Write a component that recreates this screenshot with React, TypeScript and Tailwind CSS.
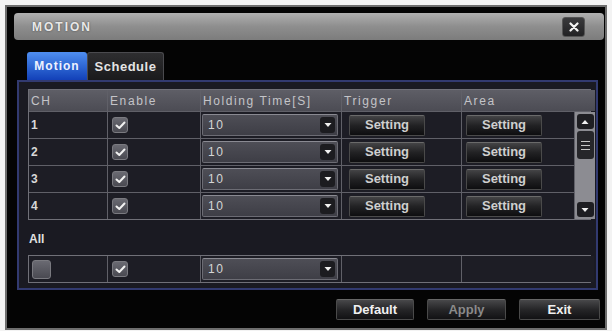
import React from "react";

const font = { fontFamily: '"Liberation Sans", Arial, sans-serif' };

function Check({ checked = true, size = 16 }: { checked?: boolean; size?: number }) {
  return (
    <div
      className="flex items-center justify-center rounded-[3px] border border-[#7a7a80] bg-gradient-to-b from-[#6a6a72] to-[#4a4a52]"
      style={{ width: size, height: size }}
    >
      {checked && (
        <svg width="11" height="9" viewBox="0 0 11 9">
          <path d="M1.5 4.5 L4.3 7 L9.5 1.5" stroke="#f2f2f2" strokeWidth="2" fill="none" strokeLinecap="round" strokeLinejoin="round" />
        </svg>
      )}
    </div>
  );
}

function Dropdown() {
  return (
    <div className="flex h-[22px] w-[136px] items-center justify-between rounded-[2px] border border-[#6c6c74] border-t-[#8a8a92] bg-gradient-to-b from-[#4e4e56] to-[#3e3e46] pl-[5px] pr-[2px]">
      <span className="text-[12px] tracking-[1.5px] text-[#d6d6d6]">10</span>
      <div className="flex h-[16px] w-[15px] items-center justify-center rounded-[3px] bg-[#1c1c20]">
        <svg width="8" height="6" viewBox="0 0 8 6">
          <path d="M0.5 1 L7.5 1 L4 5 Z" fill="#f0f0f0" />
        </svg>
      </div>
    </div>
  );
}

function SettingBtn() {
  return (
    <div className="flex h-[21px] w-[76px] items-center justify-center rounded-[2px] border border-[#4a4a4a] border-t-[#6a6a6a] bg-gradient-to-b from-[#444446] via-[#222224] to-[#0e0e10] text-[13px] font-bold text-[#cfcfcf]">
      Setting
    </div>
  );
}

function Cell({ children, className = "" }: { children?: React.ReactNode; className?: string }) {
  return <div className={"flex items-center bg-[#1d1d25] " + className}>{children}</div>;
}

export default function App() {
  const rows = [1, 2, 3, 4];
  return (
    <div className="h-[331px] w-[612px] overflow-hidden bg-[#f3f3f3] pl-[5px] pt-[5px]" style={font}>
      <div className="flex h-[325px] w-[602px] flex-col border-2 border-[#6e6e6e] bg-[#040404]">
        {/* Title bar */}
        <div className="ml-[7px] mr-[1px] mt-[6px] flex h-[27px] items-center justify-between rounded-[4px] bg-gradient-to-b from-[#b0b0b0] via-[#8e8e8e] to-[#7c7c7c] pl-[18px] pr-[19px]">
          <span className="text-[12px] font-bold tracking-[2px] text-[#e8e8e8] [text-shadow:0_0_2px_#444]">MOTION</span>
          <div className="flex h-[20px] w-[23px] items-center justify-center rounded-[3px] border border-[#555] bg-gradient-to-b from-[#3a3a3c] to-[#222224]">
            <svg width="10" height="10" viewBox="0 0 10 10">
              <path d="M1.5 1.5 L8.5 8.5 M8.5 1.5 L1.5 8.5" stroke="#f4f4f4" strokeWidth="2.2" strokeLinecap="round" />
            </svg>
          </div>
        </div>

        {/* Tabs */}
        <div className="ml-[20px] mt-[12px] flex h-[28px] items-end">
          <div className="flex h-[28px] w-[60px] items-center justify-center rounded-t-[3px] bg-gradient-to-b from-[#4f8ef0] to-[#1340b8] text-[12px] font-bold tracking-[1px] text-[#eef2ff]">
            Motion
          </div>
          <div className="flex h-[28px] w-[77px] items-center justify-center rounded-t-[3px] border border-b-0 border-[#4a4a4e] bg-gradient-to-b from-[#2e2e30] to-[#1a1a1c] text-[13px] font-bold tracking-[0.5px] text-[#e4e4e4]">
            Schedule
          </div>
        </div>

        {/* Panel */}
        <div className="ml-[10px] flex h-[210px] w-[581px] flex-col border-2 border-[#323a70] bg-[#1a1a22] pl-[9px] pt-[7px]">
          <div className="grid w-[563px] grid-cols-[78px_92px_140px_119px_112px_20px] grid-rows-[21px_26px_26px_26px_26px] gap-px border border-[#707078] bg-[#606068]">
            {/* header */}
            {["CH", "Enable", "Holding Time[S]", "Trigger", "Area"].map((h, i) => (
              <div
                key={h}
                className={
                  "flex items-center bg-gradient-to-b from-[#5e5e66] to-[#4c4c54] pl-[2px] text-[12px] tracking-[1.6px] text-[#c4c4c8] " +
                  (i === 4 ? "col-span-2" : "")
                }
              >
                {h}
              </div>
            ))}
            {rows.map((r) => (
              <React.Fragment key={r}>
                <Cell className="pl-[2px] text-[12px] font-bold text-[#d8d8d8]">{r}</Cell>
                <Cell className="pl-[4px]">
                  <Check />
                </Cell>
                <Cell className="pl-[1px]">
                  <Dropdown />
                </Cell>
                <Cell className="pl-[7px]">
                  <SettingBtn />
                </Cell>
                <Cell className="pl-[4px]">
                  <SettingBtn />
                </Cell>
              </React.Fragment>
            ))}
            {/* scrollbar */}
            <div className="col-start-6 row-span-4 row-start-2 flex flex-col items-center bg-[#8c8c92] py-[2px]">
              <div className="flex h-[15px] w-[17px] items-center justify-center rounded-[3px] bg-[#1e1e22]">
                <svg width="8" height="6" viewBox="0 0 8 6">
                  <path d="M0.5 5 L7.5 5 L4 1 Z" fill="#f0f0f0" />
                </svg>
              </div>
              <div className="mt-[2px] flex h-[28px] w-[17px] flex-col items-center justify-center gap-[3px] rounded-[3px] bg-[#26262a]">
                <div className="h-px w-[9px] bg-[#c8c8c8]" />
                <div className="h-px w-[9px] bg-[#c8c8c8]" />
                <div className="h-px w-[9px] bg-[#c8c8c8]" />
              </div>
              <div className="flex-1" />
              <div className="flex h-[15px] w-[17px] items-center justify-center rounded-[3px] bg-[#1e1e22]">
                <svg width="8" height="6" viewBox="0 0 8 6">
                  <path d="M0.5 1 L7.5 1 L4 5 Z" fill="#f0f0f0" />
                </svg>
              </div>
            </div>
          </div>

          <div className="mt-[10px] pl-[1px] text-[12px] font-bold text-[#e0e0e0]">All</div>

          <div className="mt-[7px] grid h-[28px] w-[563px] grid-cols-[78px_92px_140px_119px_132px] gap-px border border-[#707078] bg-[#606068]">
            <Cell className="pl-[3px]">
              <Check checked={false} size={19} />
            </Cell>
            <Cell className="pl-[4px]">
              <Check />
            </Cell>
            <Cell className="pl-[1px]">
              <Dropdown />
            </Cell>
            <Cell />
            <Cell />
          </div>
        </div>

        {/* Bottom buttons */}
        <div className="mr-[5px] mt-[9px] flex justify-end gap-[13px]">
          {[
            { t: "Default", w: "w-[78px]", c: "text-[#f0f0f0]" },
            { t: "Apply", w: "w-[79px]", c: "text-[#8a8a8a]" },
            { t: "Exit", w: "w-[81px]", c: "text-[#f0f0f0]" },
          ].map((b) => (
            <div
              key={b.t}
              className={
                "flex h-[21px] items-center justify-center rounded-[2px] border border-[#4a4a4a] border-t-[#666] bg-gradient-to-b from-[#48484a] via-[#262628] to-[#121214] text-[13px] font-bold " +
                b.w +
                " " +
                b.c
              }
            >
              {b.t}
            </div>
          ))}
        </div>
      </div>
    </div>
  );
}
